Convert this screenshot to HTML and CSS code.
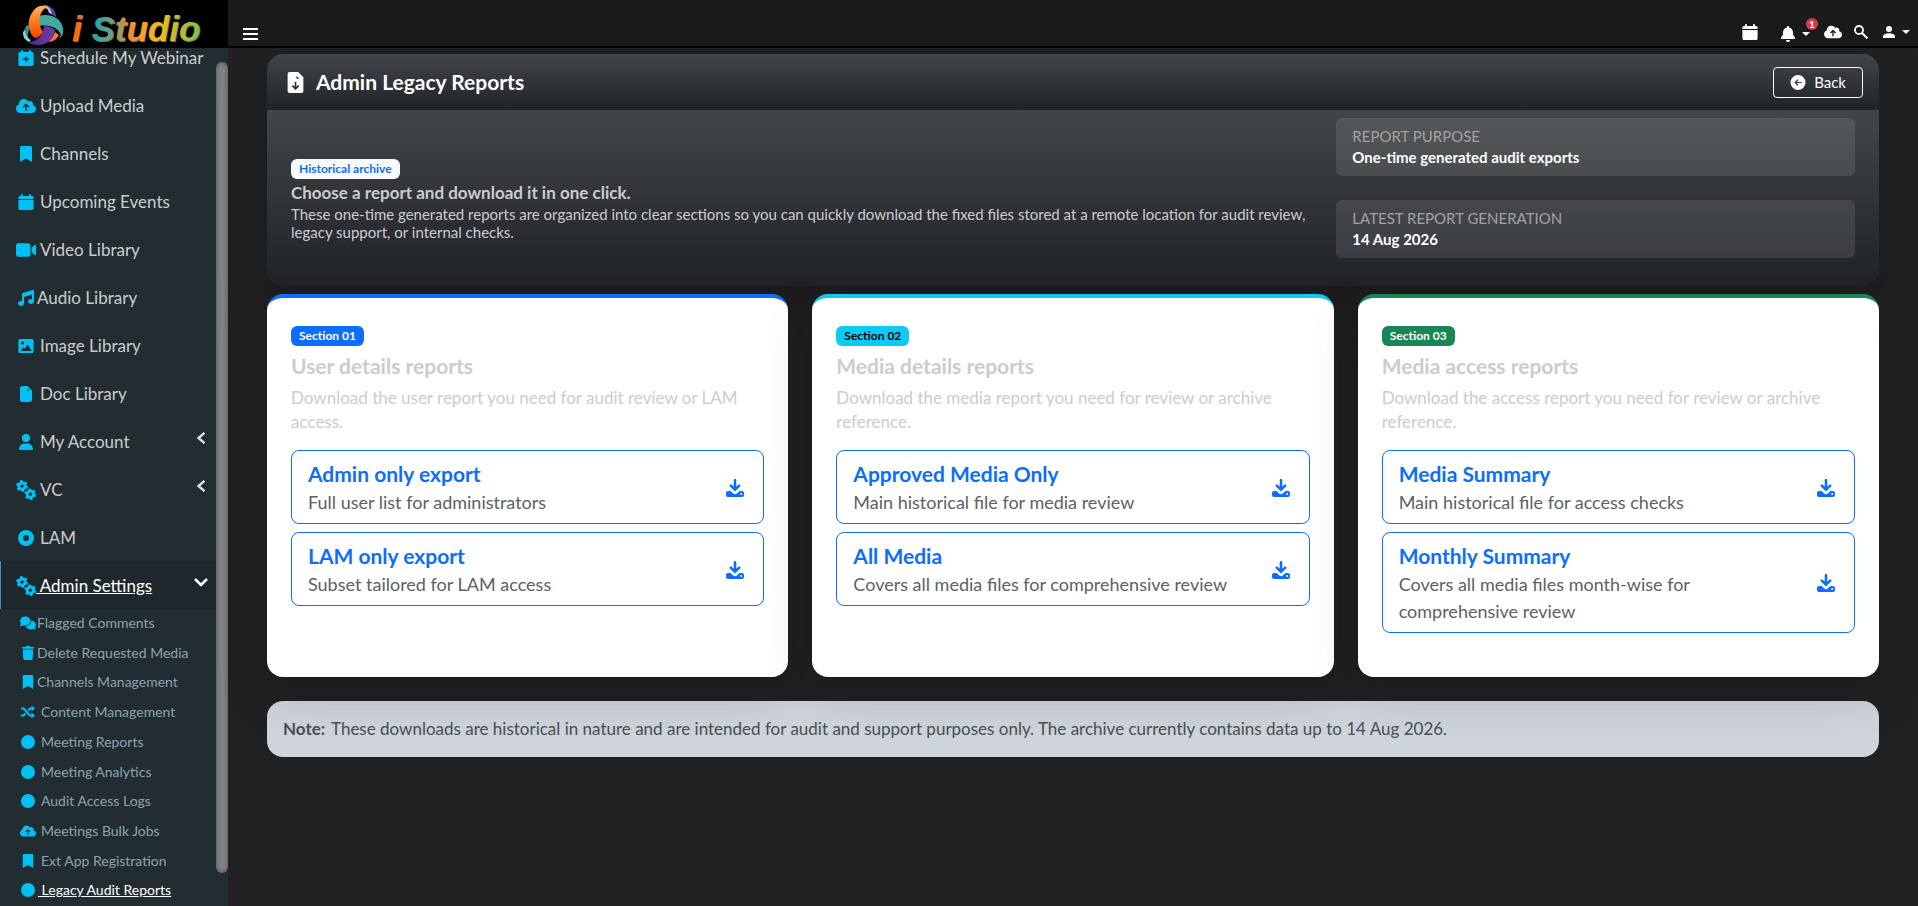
FILE: index.html
```html
<!DOCTYPE html>
<html lang="en">
<head>
  <meta charset="UTF-8" />
  <meta name="viewport" content="width=device-width, initial-scale=1.0" />
  <title>Admin Legacy Reports</title>
  <link rel="stylesheet" href="styles.css">
</head>
<body>
  <!-- icon sprite -->
  <svg class="sprite" aria-hidden="true">
    <symbol id="calendar" viewBox="0 0 16 16">
      <path d="M4 0a1 1 0 0 1 1 1v1h6V1a1 1 0 0 1 2 0v1h1a1.600 1.600 0 0 1 1.600 1.600V5H.4V3.600A1.600 1.600 0 0 1 2 2h1V1a1 1 0 0 1 1-1zM.4 6h15.200v8.400A1.600 1.600 0 0 1 14 16H2a1.600 1.600 0 0 1-1.600-1.600z"/>
    </symbol>
    <symbol id="calendar-plus" viewBox="0 0 16 16">
      <path fill-rule="evenodd" d="M4 0a1 1 0 0 1 1 1v1h6V1a1 1 0 0 1 2 0v1h1a1.600 1.600 0 0 1 1.600 1.600v10.800A1.600 1.600 0 0 1 14 16H2a1.600 1.600 0 0 1-1.600-1.600V3.600A1.600 1.600 0 0 1 2 2h1V1a1 1 0 0 1 1-1zM7.300 6.500v2H5.200v1.400h2.100V12h1.400V9.900h2.100V8.500H8.700v-2z"/>
    </symbol>
    <symbol id="cloud" viewBox="0 0 640 512">
      <path d="M144 480C64.500 480 0 415.500 0 336c0-62.800 40.200-116.200 96.200-135.900c-.1-2.700-.2-5.400-.2-8.100c0-88.400 71.600-160 160-160c59.300 0 111 32.200 138.700 80.200C409.900 102 428.300 96 448 96c53 0 96 43 96 96c0 12.200-2.300 23.800-6.400 34.600C596 238.400 640 290.100 640 352c0 70.700-57.300 128-128 128H144zm79-217c-9.400 9.400-9.400 24.600 0 33.900s24.600 9.400 33.900 0l39-39V392c0 13.300 10.700 24 24 24s24-10.700 24-24V257.900l39 39c9.400 9.400 24.600 9.400 33.900 0s9.400-24.600 0-33.900l-80-80c-9.400-9.400-24.600-9.400-33.900 0l-80 80z"/>
    </symbol>
    <symbol id="bookmark" viewBox="0 0 384 512">
      <path d="M0 512V48C0 21.500 21.500 0 48 0h288c26.500 0 48 21.500 48 48v464L192 400 0 512z"/>
    </symbol>
    <symbol id="video" viewBox="0 0 18 12">
      <path d="M2 0h9a2 2 0 0 1 2 2v8a2 2 0 0 1-2 2H2a2 2 0 0 1-2-2V2a2 2 0 0 1 2-2zM14 4l2.800-2.600A.7.700 0 0 1 18 2v8a.7.700 0 0 1-1.200.6L14 8z"/>
    </symbol>
    <symbol id="music" viewBox="0 0 512 512">
      <path d="M499.100 6.300c8.100 6 12.900 15.600 12.900 25.700v336c0 44.200-43 80-96 80s-96-35.800-96-80s43-80 96-80c11.200 0 22 1.600 32 4.600V147L192 223.800V432c0 44.200-43 80-96 80s-96-35.800-96-80s43-80 96-80c11.200 0 22 1.600 32 4.600V128c0-14.100 9.300-26.600 22.800-30.700l320-96c9.700-2.900 20.200-1.100 28.300 5z"/>
    </symbol>
    <symbol id="image" viewBox="0 0 16 16">
      <path fill-rule="evenodd" d="M2 1h12a1.600 1.600 0 0 1 1.600 1.600v10.800A1.600 1.600 0 0 1 14 15H2a1.600 1.600 0 0 1-1.600-1.600V2.600A1.600 1.600 0 0 1 2 1zM4.500 3.500a1.500 1.500 0 1 0 0 3 1.500 1.500 0 0 0 0-3zM3 13h10.500L9.800 6.500l-3 4.300L5.500 9.300z"/>
    </symbol>
    <symbol id="file" viewBox="0 0 384 512">
      <path fill-rule="evenodd" d="M64 0h176l144 144v304c0 35-29 64-64 64H64c-35 0-64-29-64-64V64C0 29 29 0 64 0zM232 80v72h72z"/>
    </symbol>
    <symbol id="file-down" viewBox="0 0 384 512">
      <path fill-rule="evenodd" d="M48 0h210l126 126v338c0 26-22 48-48 48H48c-26 0-48-22-48-48V48C0 22 22 0 48 0zM216 90v74h74zM172 240v118l-44-42-30 30 94 94 94-94-30-30-44 42V240z"/>
    </symbol>
    <symbol id="user" viewBox="0 0 448 512">
      <path d="M224 256A128 128 0 1 0 224 0a128 128 0 1 0 0 256zm-45.700 48C79.800 304 0 383.800 0 482.300C0 498.700 13.300 512 29.700 512H418.300c16.400 0 29.700-13.300 29.700-29.700C448 383.800 368.200 304 269.700 304H178.300z"/>
    </symbol>
    <symbol id="cogs" viewBox="0 0 20 20">
      <g fill="none" stroke="currentColor">
        <circle cx="6" cy="6" r="3.200" stroke-width="3"/>
        <circle cx="6" cy="6" r="4.900" stroke-width="2" stroke-dasharray="2.500 2.630"/>
        <circle cx="14.300" cy="14.300" r="3.200" stroke-width="3"/>
        <circle cx="14.300" cy="14.300" r="4.900" stroke-width="2" stroke-dasharray="2.500 2.630"/>
      </g>
    </symbol>
    <symbol id="disc" viewBox="0 0 16 16">
      <circle cx="8" cy="8" r="5.500" fill="none" stroke="currentColor" stroke-width="5"/>
    </symbol>
    <symbol id="circle" viewBox="0 0 16 16"><circle cx="8" cy="8" r="8"/></symbol>
    <symbol id="comments" viewBox="0 0 640 512">
      <path d="M208 352c115 0 208-79 208-176S323 0 208 0 0 79 0 176c0 39 15 74 40 103-3 31-16 58-32 79-8 11 0 26 13 26 46 0 84-18 108-36 25 3 52 4 79 4zM448 176c0 113-99 197-219 206 25 76 109 130 203 130 29 0 56-4 80-13 30 9 62 13 107 13 13 0 20-15 13-26-9-13-22-30-30-60 24-27 38-60 38-96 0-92-86-167-192-176z"/>
    </symbol>
    <symbol id="trash" viewBox="0 0 448 512">
      <path d="M135 18c5-11 17-18 29-18h120c12 0 24 7 29 18l7 14h96c18 0 32 14 32 32s-14 32-32 32H32C14 96 0 82 0 64s14-32 32-32h96zM32 128h384l-21 339c-2 25-23 45-48 45H101c-25 0-46-20-48-45z"/>
    </symbol>
    <symbol id="shuffle" viewBox="0 0 16 16">
      <path fill="none" stroke="currentColor" stroke-width="2.200" d="M0 4h3l7 8h3M0 12h3l2-2.300M8 6.300L10 4h3"/>
      <path d="M12 .5L16 4l-4 3.500zM12 8.500l4 3.500-4 3.500z"/>
    </symbol>
    <symbol id="angle-left" viewBox="0 0 12 12">
      <path fill="none" stroke="currentColor" stroke-width="2.400" d="M9.500 .8L3.500 6l6 5.200"/>
    </symbol>
    <symbol id="angle-down" viewBox="0 0 14 12">
      <path fill="none" stroke="currentColor" stroke-width="2.600" d="M1 3l6 6 6-6"/>
    </symbol>
    <symbol id="bell" viewBox="0 0 448 512">
      <path d="M224 0c-17.700 0-32 14.300-32 32v19.200C119 66 64 130.600 64 208v18.800c0 47-17.300 92.400-48.500 127.600l-7.400 8.300c-8.400 9.400-10.400 22.900-5.300 34.400S19.400 416 32 416h384c12.600 0 24-7.400 29.200-18.900s3.100-25-5.300-34.400l-7.400-8.300C401.300 319.200 384 273.900 384 226.800V208c0-77.400-55-142-128-156.800V32c0-17.700-14.300-32-32-32zm45.300 493.300c12-12 18.700-28.300 18.700-45.300H160c0 17 6.700 33.300 18.700 45.300s28.300 18.700 45.300 18.700s33.300-6.700 45.300-18.700z"/>
    </symbol>
    <symbol id="search" viewBox="0 0 14 14">
      <circle cx="5" cy="5" r="4" fill="none" stroke="currentColor" stroke-width="1.800"/>
      <path stroke="currentColor" stroke-width="2" d="M8 8l5.400 5.400"/>
    </symbol>
    <symbol id="person" viewBox="0 0 12 12">
      <circle cx="6" cy="3" r="3"/>
      <path d="M0 12v-1.500C0 8.500 3 7.300 6 7.300s6 1.200 6 3.200V12z"/>
    </symbol>
    <symbol id="back" viewBox="0 0 16 16">
      <path fill-rule="evenodd" d="M8 0a8 8 0 1 1 0 16A8 8 0 0 1 8 0zM7.500 4.600L4.100 8l3.400 3.400.9-.9-1.900-1.900h5.300V7.400H6.500l1.900-1.900z"/>
    </symbol>
    <symbol id="download" viewBox="0 0 18 18">
      <path d="M7.700 1.200a1.300 1.300 0 0 1 2.600 0v6.600l2-2a1.200 1.200 0 0 1 1.800 1.700L9 12.500 3.900 7.500a1.200 1.200 0 0 1 1.800-1.700l2 2z"/>
      <path fill-rule="evenodd" d="M2 12h2.500l2.700 2.500a2.700 2.700 0 0 0 3.600 0l2.700-2.500H16a2 2 0 0 1 2 2v2a2 2 0 0 1-2 2H2a2 2 0 0 1-2-2v-2a2 2 0 0 1 2-2zM15.200 14a1 1 0 1 0 0 2 1 1 0 0 0 0-2z"/>
    </symbol>
  </svg>

  <header class="topbar">
    <a class="logo" href="#">
      <svg class="logo-mark" viewBox="0 0 42 42" aria-hidden="true">
        <defs>
          <linearGradient id="orange" x1="0" y1="0" x2="0" y2="1">
            <stop offset="0" stop-color="#ffb366"/><stop offset=".5" stop-color="#ff7a1f"/><stop offset="1" stop-color="#ff4000"/>
          </linearGradient>
          <linearGradient id="purple" x1="0" y1="0" x2="1" y2="0">
            <stop offset="0" stop-color="#55298c"/><stop offset="1" stop-color="#6a3aa5"/>
          </linearGradient>
        </defs>
        <!-- back ring pieces -->
        <path fill="#5f3a9c" d="M24 1c7 2 10 6 10 12l-5-3c-1-4-3-7-5-9z"/>
        <path fill="#cdb8ee" d="M21 1c5 0 8 4 9 9l-3-1c-1-4-3-6-6-8z"/>
        <path fill="#ff7a2a" d="M26 38c5 0 9-3 11-7l-4-3c-1 4-4 8-7 10z"/>
        <path fill="#2f8f8a" d="M5 21c-3 4-4 8-3 13l5 3c-2-6-1-10 2-14z"/>
        <path fill="#8fd8d0" d="M1 28c0 5 2 8 6 10l2-2c-4-2-6-5-6-10z"/>
        <!-- front bands -->
        <path fill="#45a9a3" d="M11 14c12-6 27-3 30 10 0 3 0 5-2 7-3-8-13-12-28-8z"/>
        <path fill="#8fd8d0" d="M39 31c2-3 3-6 2-9 1 5 0 9-4 13z"/>
        <path fill="url(#purple)" d="M6 38c9 0 15-6 16-16 4 0 8 1 11 4-1 9-8 15-17 15-4 0-8-1-10-3z"/>
        <path fill="url(#orange)" d="M27 6c-3-5-9-6-14-1-6 6-8 15-5 22 1 4 3 6 6 7 3-1 5-3 7-6-5-7-5-17 1-23 2-1 4 0 5 1z"/>
      </svg>
      <svg class="logo-text" viewBox="0 0 138 36" role="img" aria-label="i Studio">
        <defs>
          <linearGradient id="rainbow" gradientUnits="userSpaceOnUse" x1="0" y1="0" x2="130" y2="0">
            <stop offset="0" stop-color="#ff6a00"/><stop offset=".1" stop-color="#ff6a00"/>
            <stop offset=".2" stop-color="#1fa8a8"/><stop offset=".34" stop-color="#7d9c70"/>
            <stop offset=".46" stop-color="#f58a2a"/><stop offset=".68" stop-color="#fdb913"/>
            <stop offset="1" stop-color="#7cc142"/>
          </linearGradient>
        </defs>
        <text x="3" y="38" fill="#777">i Studio</text>
        <text x="2" y="37" fill="url(#rainbow)">i Studio</text>
      </svg>
    </a>
    <button class="menu-toggle" aria-label="Toggle menu"><span></span><span></span><span></span></button>
    <nav class="top-icons" aria-label="Quick links">
      <a class="top-calendar" href="#" aria-label="Calendar"><svg class="icon-16"><use href="#calendar"/></svg></a>
      <button class="top-bell" aria-label="Notifications">
        <svg class="icon-16"><use href="#bell"/></svg><i class="caret"></i>
        <span class="count">1</span>
      </button>
      <a href="#" aria-label="Upload"><svg class="icon-18"><use href="#cloud"/></svg></a>
      <a class="top-search" href="#" aria-label="Search"><svg class="icon-14"><use href="#search"/></svg></a>
      <button class="top-user" aria-label="Profile"><svg class="icon-12"><use href="#person"/></svg><i class="caret"></i></button>
    </nav>
  </header>

  <div class="layout">
    <aside class="sidebar">
      <ul class="menu">
        <li><a href="#"><svg><use href="#calendar-plus"/></svg>Schedule My Webinar</a></li>
        <li><a href="#"><svg class="wide"><use href="#cloud"/></svg>Upload Media</a></li>
        <li><a href="#"><svg><use href="#bookmark"/></svg>Channels</a></li>
        <li><a href="#"><svg><use href="#calendar"/></svg>Upcoming Events</a></li>
        <li><a href="#"><svg><use href="#video"/></svg>Video Library</a></li>
        <li><a class="tight" href="#"><svg><use href="#music"/></svg>Audio Library</a></li>
        <li><a href="#"><svg><use href="#image"/></svg>Image Library</a></li>
        <li><a href="#"><svg><use href="#file"/></svg>Doc Library</a></li>
        <li><a href="#"><svg><use href="#user"/></svg>My Account<svg class="angle"><use href="#angle-left"/></svg></a></li>
        <li><a href="#"><svg class="wide"><use href="#cogs"/></svg>VC<svg class="angle"><use href="#angle-left"/></svg></a></li>
        <li><a href="#"><svg><use href="#disc"/></svg>LAM</a></li>
        <li class="active"><a href="#"><svg class="wide"><use href="#cogs"/></svg><u>&nbsp;Admin Settings</u><svg class="angle"><use href="#angle-down"/></svg></a></li>
        <li class="open">
          <ul class="submenu">
            <li><a class="tight" href="#"><svg><use href="#comments"/></svg>Flagged Comments</a></li>
            <li><a class="tight" href="#"><svg><use href="#trash"/></svg>Delete Requested Media</a></li>
            <li><a class="tight" href="#"><svg><use href="#bookmark"/></svg>Channels Management</a></li>
            <li><a href="#"><svg><use href="#shuffle"/></svg>Content Management</a></li>
            <li><a href="#"><svg><use href="#circle"/></svg>Meeting Reports</a></li>
            <li><a href="#"><svg><use href="#circle"/></svg>Meeting Analytics</a></li>
            <li><a href="#"><svg><use href="#circle"/></svg>Audit Access Logs</a></li>
            <li><a href="#"><svg><use href="#cloud"/></svg>Meetings Bulk Jobs</a></li>
            <li><a href="#"><svg><use href="#bookmark"/></svg>Ext App Registration</a></li>
            <li class="current"><a href="#"><svg><use href="#circle"/></svg><u>&nbsp;Legacy Audit Reports</u></a></li>
          </ul>
        </li>
      </ul>
      <div class="scrollbar"><div class="thumb"></div></div>
    </aside>

    <main class="content">
      <section class="hero">
        <div class="hero-header">
          <h1><svg><use href="#file-down"/></svg>Admin Legacy Reports</h1>
          <button class="btn-back"><svg><use href="#back"/></svg>Back</button>
        </div>
        <div class="hero-body">
          <div class="hero-text">
            <span class="badge badge-light">Historical archive</span>
            <h2>Choose a report and download it in one click.</h2>
            <p>These one-time generated reports are organized into clear sections so you can quickly download the fixed files stored at a remote location for audit review, legacy support, or internal checks.</p>
          </div>
          <dl class="facts">
            <div class="fact">
              <dt>REPORT PURPOSE</dt>
              <dd>One-time generated audit exports</dd>
            </div>
            <div class="fact">
              <dt>LATEST REPORT GENERATION</dt>
              <dd>14 Aug 2026</dd>
            </div>
          </dl>
        </div>
      </section>

      <div class="cards">
        <section class="card card-blue">
          <span class="badge">Section 01</span>
          <h3>User details reports</h3>
          <p>Download the user report you need for audit review or LAM access.</p>
          <a class="report" href="#">
            <span class="report-text"><strong>Admin only export</strong><span>Full user list for administrators</span></span>
            <svg><use href="#download"/></svg>
          </a>
          <a class="report" href="#">
            <span class="report-text"><strong>LAM only export</strong><span>Subset tailored for LAM access</span></span>
            <svg><use href="#download"/></svg>
          </a>
        </section>

        <section class="card card-cyan">
          <span class="badge">Section 02</span>
          <h3>Media details reports</h3>
          <p>Download the media report you need for review or archive reference.</p>
          <a class="report" href="#">
            <span class="report-text"><strong>Approved Media Only</strong><span>Main historical file for media review</span></span>
            <svg><use href="#download"/></svg>
          </a>
          <a class="report" href="#">
            <span class="report-text"><strong>All Media</strong><span>Covers all media files for comprehensive review</span></span>
            <svg><use href="#download"/></svg>
          </a>
        </section>

        <section class="card card-green">
          <span class="badge">Section 03</span>
          <h3>Media access reports</h3>
          <p>Download the access report you need for review or archive reference.</p>
          <a class="report" href="#">
            <span class="report-text"><strong>Media Summary</strong><span>Main historical file for access checks</span></span>
            <svg><use href="#download"/></svg>
          </a>
          <a class="report" href="#">
            <span class="report-text"><strong>Monthly Summary</strong><span>Covers all media files month-wise for comprehensive review</span></span>
            <svg><use href="#download"/></svg>
          </a>
        </section>
      </div>

      <p class="note"><strong>Note:</strong> These downloads are historical in nature and are intended for audit and support purposes only. The archive currently contains data up to 14 Aug 2026.</p>
    </main>
  </div>
</body>
</html>
```
FILE: styles.css
```css
* {
  box-sizing: border-box;
  margin: 0;
  padding: 0;
}

body {
  font-family: Lato, sans-serif;
  font-size: 17px;
  line-height: 24px;
  background: #212121;
  color: #ccc;
  height: 100vh;
  display: flex;
  flex-direction: column;
  overflow: hidden;
}

a {
  color: inherit;
  text-decoration: none;
}

button {
  font: inherit;
  color: #fff;
  background: none;
  border: none;
  cursor: pointer;
}

ul {
  list-style: none;
}

svg {
  fill: currentColor;
  flex-shrink: 0;
}

.sprite {
  display: none;
}

/* top bar */
.topbar {
  height: 48px;
  flex-shrink: 0;
  display: flex;
  align-items: stretch;
  background: #1b1b1b;
  border-bottom: 2px solid #000;
}

.logo {
  width: 228px;
  height: 48px;
  padding: 4px 0 0 22px;
  display: flex;
  gap: 6px;
  background: #000;
}

.logo-mark {
  width: 42px;
  height: 42px;
}

.logo-text {
  width: 138px;
  height: 36px;
  overflow: visible;
  font: italic bold 35px "Liberation Sans", sans-serif;
}

.menu-toggle {
  display: flex;
  flex-direction: column;
  gap: 3px;
  margin: 28px 0 0 15px;
}

.menu-toggle span {
  width: 15px;
  height: 2px;
  background: #fff;
}

.top-icons {
  margin-left: auto;
  padding: 18px 8px 0 0;
  display: flex;
  align-items: center;
  color: #fff;
}

.top-icons a,
.top-icons button {
  display: flex;
  align-items: center;
  position: relative;
}

.icon-12 { width: 12px; height: 12px; }
.icon-14 { width: 14px; height: 14px; }
.icon-16 { width: 16px; height: 16px; }
.icon-18 { width: 18px; height: 16px; }

.top-calendar { margin-right: 22px; }
.top-bell { margin: 4px 14px 0 0; gap: 6px; }
.top-search { margin: 0 15px 0 12px; }
.top-user { gap: 7px; }

.caret {
  border: 4px solid transparent;
  border-top-color: #fff;
  border-bottom: none;
}

.count {
  position: absolute;
  top: -8px;
  right: -8px;
  width: 12px;
  height: 12px;
  border-radius: 6px;
  background: #dc3545;
  font-size: 10px;
  font-weight: 700;
  line-height: 12px;
  text-align: center;
}

/* sidebar */
.layout {
  flex: 1;
  min-height: 0;
  display: flex;
}

.sidebar {
  width: 228px;
  flex-shrink: 0;
  display: flex;
  background: #222d32;
}

.menu {
  flex: 1;
  margin-top: -15px;
  display: flex;
  flex-direction: column;
}

.menu a {
  height: 48px;
  padding: 1px 8px 0 15px;
  border-left: 1px solid transparent;
  display: flex;
  align-items: center;
  gap: 4px;
  line-height: 18px;
}

.menu svg {
  width: 20px;
  height: 16px;
  color: #00c0f4;
}

.menu svg.wide {
  height: 20px;
}

.menu .tight {
  gap: 1px;
}

.menu svg.angle {
  width: 14px;
  height: 12px;
  margin: 0 0 8px auto;
  color: #ddd;
}

.menu .active > a {
  background: #1e282c;
  border-left-color: #3c8dbc;
  color: #fff;
  gap: 0;
}

.menu .active svg.angle {
  color: #fff;
}

.open {
  flex: 1;
  display: flex;
}

.submenu {
  flex: 1;
  display: flex;
  flex-direction: column;
}

.submenu li {
  flex: 1;
}

.submenu a {
  height: 28px;
  padding: 0 0 0 19px;
  gap: 5px;
  font-size: 14px;
  color: #8aa4af;
}

.submenu svg {
  width: 16px;
  height: 14px;
}

.submenu .current a {
  color: #fff;
  gap: 2px;
}

.scrollbar {
  width: 12px;
  padding: 14px 0 33px;
  display: flex;
}

.thumb {
  flex: 1;
  border-radius: 6px;
  background: #808080;
  box-shadow: inset 0 0 4px rgba(0, 0, 0, 0.4);
}

/* content */
.content {
  flex: 1;
  padding: 6px 39px;
}

.hero {
  border-radius: 16px;
  overflow: hidden;
  box-shadow: 0 16px 48px rgba(0, 0, 0, 0.2);
  margin-bottom: 8px;
}

.hero-header {
  height: 56px;
  padding: 0 16px 0 20px;
  display: flex;
  align-items: center;
  justify-content: space-between;
  background: linear-gradient(#424649, #1f2227);
}

h1 {
  display: flex;
  align-items: center;
  gap: 12px;
  font-size: 21px;
  color: #fff;
}

h1 svg {
  width: 17px;
  height: 21px;
}

.btn-back {
  height: 31px;
  padding: 0 16px;
  display: flex;
  align-items: center;
  gap: 8px;
  border: 1px solid #f8f9fa;
  border-radius: 4px;
  font-size: 15px;
}

.btn-back svg {
  width: 16px;
  height: 15px;
}

.hero-body {
  height: 176px;
  padding: 8px 24px 28px;
  display: grid;
  grid-template-columns: 2fr 1fr;
  gap: 8px;
  background: linear-gradient(#424649, #1f2227);
}

.hero-text {
  align-self: center;
  padding: 24px 16px 0 0;
}

.badge {
  display: inline-block;
  padding: 0 8px;
  border-radius: 6px;
  font-size: 12px;
  font-weight: 700;
  line-height: 20px;
  vertical-align: top;
}

.badge-light {
  background: #f8f9fa;
  color: #0d6efd;
}

h2 {
  margin-bottom: 2px;
  font-size: 17px;
  line-height: 20px;
}

.hero-text p {
  font-size: 15px;
  line-height: 18px;
}

.facts {
  display: flex;
  flex-direction: column;
  gap: 24px;
  font-size: 15px;
  line-height: 21px;
}

.fact {
  height: 58px;
  padding: 8px 16px;
  border-radius: 6px;
  background: rgba(255, 255, 255, 0.1);
}

.fact dt {
  color: #a0a2a4;
}

.fact dd {
  color: #fff;
  font-weight: 700;
}

.cards {
  display: grid;
  grid-template-columns: repeat(3, 1fr);
  gap: 24px;
}

.card {
  position: relative;
  padding: 28px 24px 44px;
  background: #fff;
  border-top: 4px solid;
  border-radius: 16px;
  box-shadow: 0 16px 48px rgba(0, 0, 0, 0.175);
}

.card-blue { border-color: #0d6efd; }
.card-cyan { border-color: #0dcaf0; }
.card-green { border-color: #198754; }

.card .badge { color: #fff; }
.card-blue .badge { background: #0d6efd; }
.card-cyan .badge { background: #0dcaf0; color: #000; }
.card-green .badge { background: #198754; }

.card h3 {
  margin: 4px 0 8px;
  font-size: 21px;
  line-height: 24px;
}

.card p {
  margin-bottom: 16px;
}

.report {
  min-height: 74px;
  margin-bottom: 8px;
  padding: 8px 19px 7px 16px;
  display: flex;
  align-items: center;
  justify-content: space-between;
  gap: 24px;
  border: 1px solid #0d6efd;
  border-radius: 8px;
  color: #0d6efd;
}

.report:last-child {
  margin-bottom: 0;
}

.report svg {
  width: 18px;
  height: 18px;
}

.report-text strong,
.report-text span {
  display: block;
}

.report-text strong {
  font-size: 21px;
  line-height: 30px;
}

.report-text span {
  font-size: 18px;
  line-height: 27px;
  color: #5c6166;
}

.note {
  margin-top: 24px;
  padding: 16px;
  border-radius: 16px;
  background: #ced4da;
  color: #4a4f55;
}

.note strong {
  margin-right: 2px;
}
```
